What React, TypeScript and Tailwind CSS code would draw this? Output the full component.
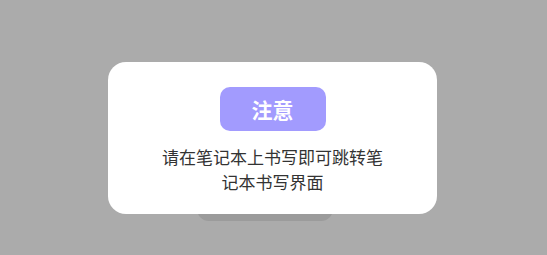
import React from "react";

export default function App() {
  return (
    <div
      className="relative w-[547px] h-[255px] bg-[#ababab] overflow-hidden"
      style={{ fontFamily: '"Noto Sans CJK SC", "Noto Sans", sans-serif' }}
    >
      <div className="absolute left-[197px] top-[200px] w-[136px] h-[21px] rounded-b-[12px] bg-[#9b9b9b]" />
      <div className="absolute left-[108px] top-[62px] w-[329px] h-[152px] rounded-[18px] bg-white flex flex-col items-center pt-[25px]">
        <div className="w-[106px] h-[44px] rounded-[10px] bg-[#a29bfe] flex items-center justify-center text-white text-[21px] font-bold leading-none">
          注意
        </div>
        <div className="mt-[13px] w-[232px] text-center text-[17px] leading-[25px] text-[#333333]">
          请在笔记本上书写即可跳转笔记本书写界面
        </div>
      </div>
    </div>
  );
}
